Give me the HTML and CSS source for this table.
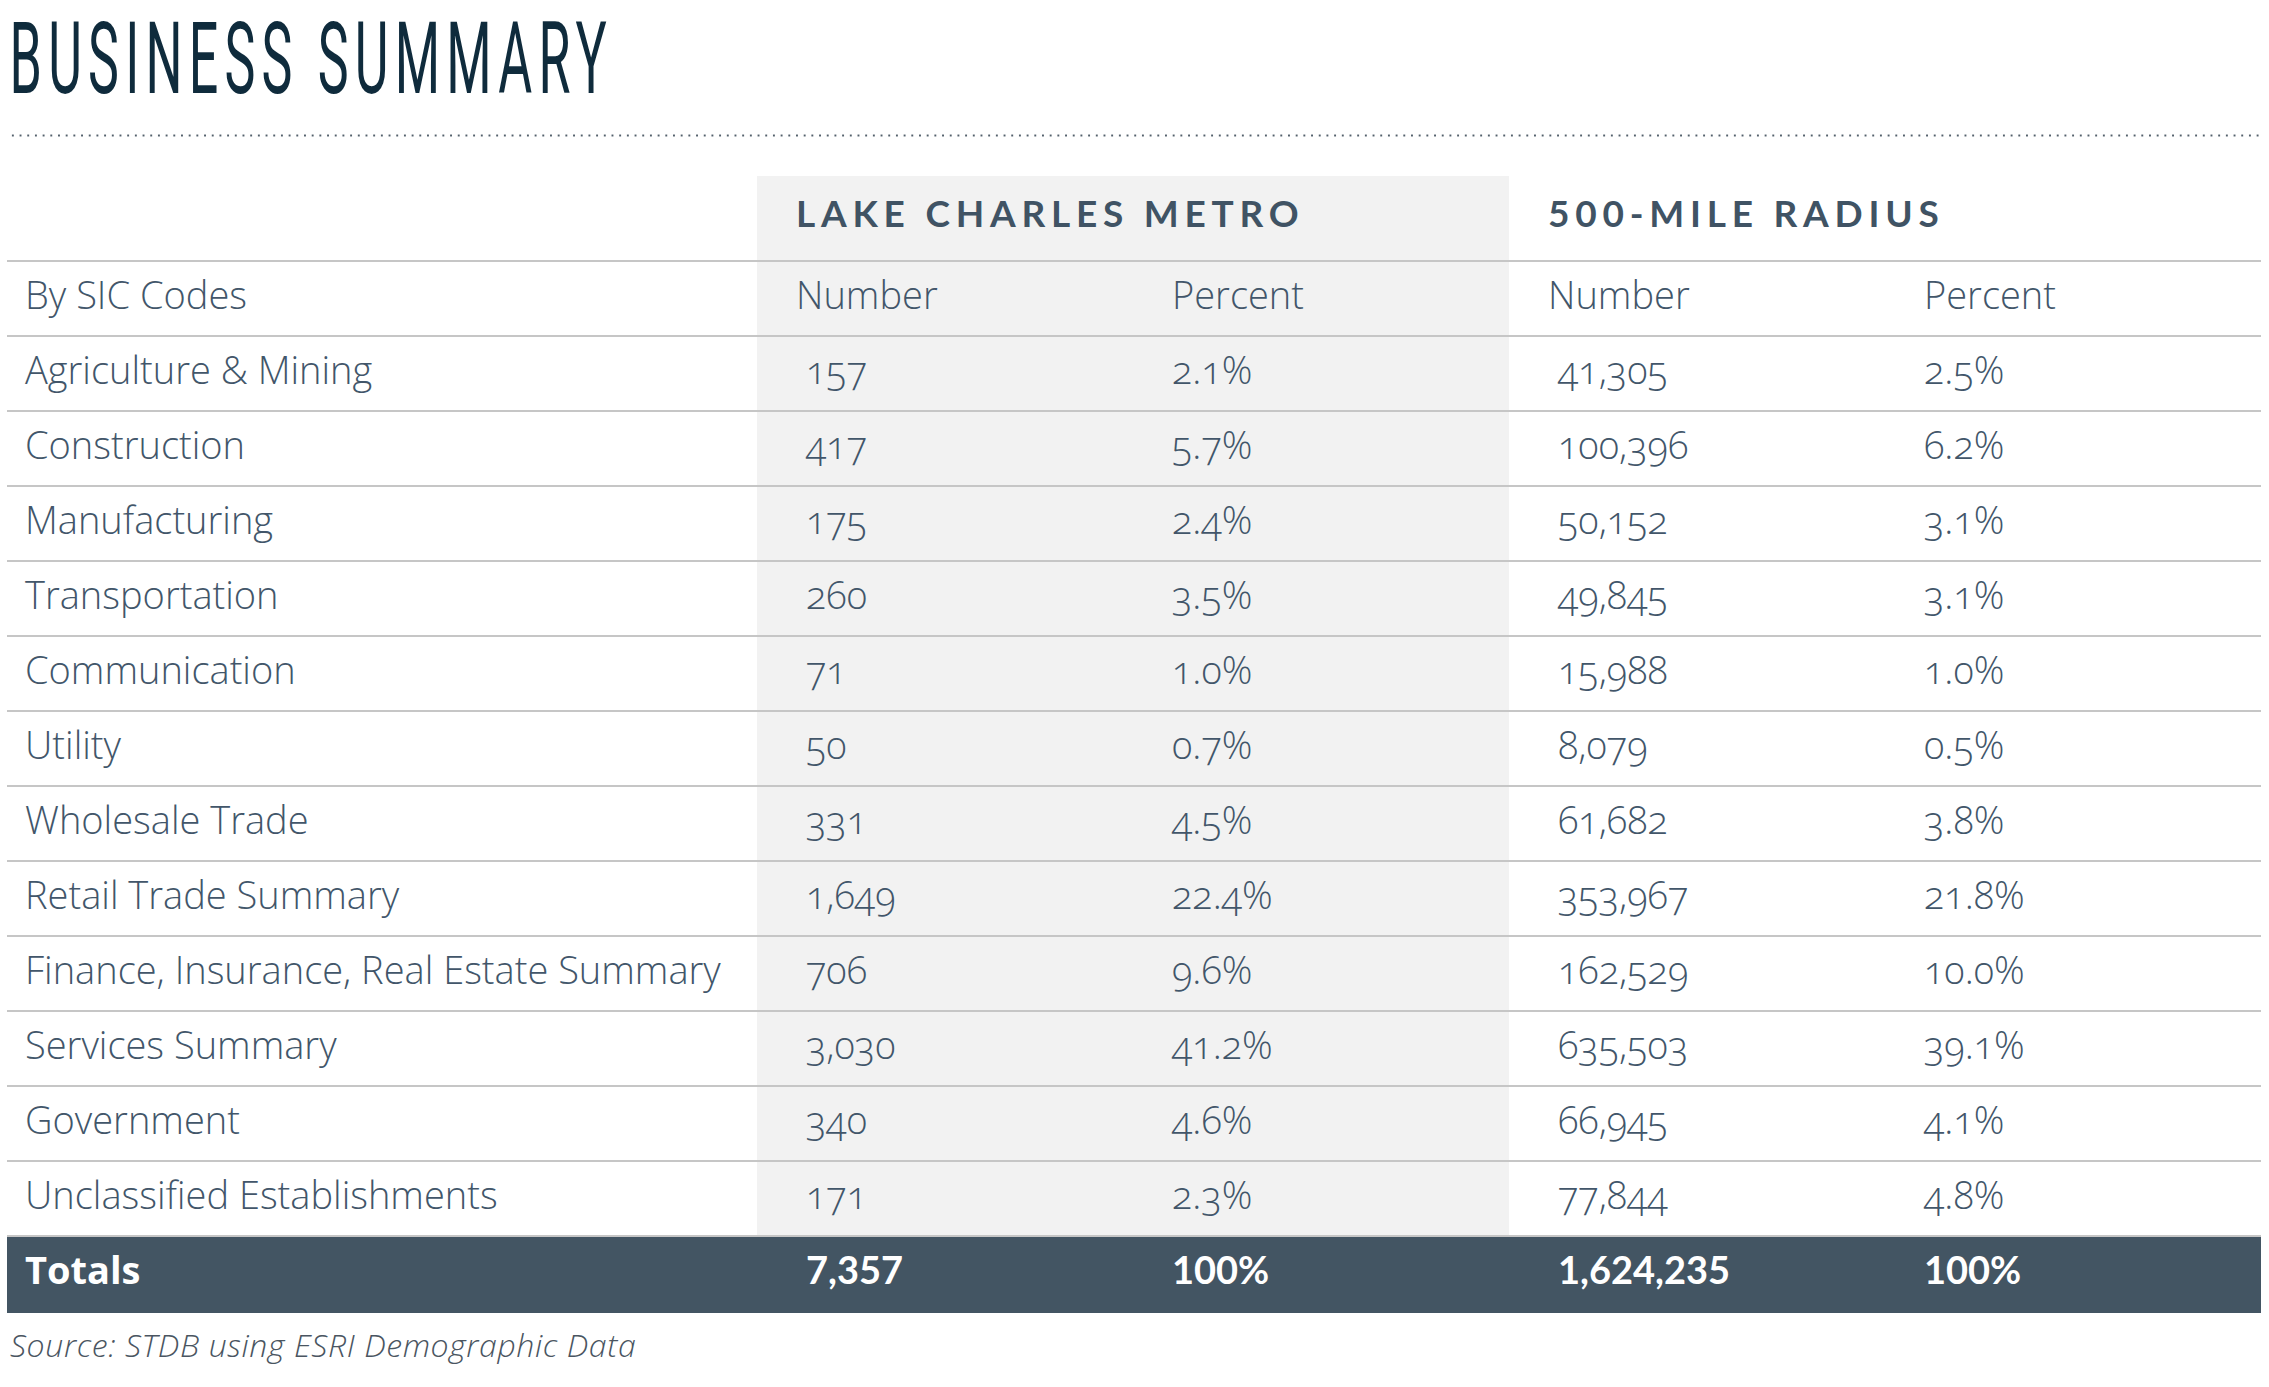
FILE: index.html
```html
<!DOCTYPE html>
<html lang="en">
<head>
<meta charset="utf-8">
<title>Business Summary</title>
<link rel="stylesheet" href="styles.css">
</head>
<body>
<div class="page">
  <header class="head">
    <h1 class="title"><span class="title-text">BUSINESS SUMMARY</span></h1>
    <div class="dots"></div>
  </header>
  <table class="summary">
    <colgroup>
      <col class="c-label">
      <col class="c-data">
      <col class="c-data">
      <col class="c-data">
      <col class="c-data">
    </colgroup>
    <thead>
      <tr class="group-row">
        <th class="blank"></th>
        <th class="group shade" colspan="2">LAKE CHARLES METRO</th>
        <th class="group" colspan="2">500-MILE RADIUS</th>
      </tr>
      <tr class="sub-row">
        <th class="label">By SIC Codes</th>
        <th class="sub shade">Number</th>
        <th class="sub shade">Percent</th>
        <th class="sub">Number</th>
        <th class="sub">Percent</th>
      </tr>
    </thead>
    <tbody>
      <tr><td class="label">Agriculture &amp; Mining</td><td class="num shade">157</td><td class="pct shade">2.1%</td><td class="num">41,305</td><td class="pct">2.5%</td></tr>
      <tr><td class="label">Construction</td><td class="num shade">417</td><td class="pct shade">5.7%</td><td class="num">100,396</td><td class="pct">6.2%</td></tr>
      <tr><td class="label">Manufacturing</td><td class="num shade">175</td><td class="pct shade">2.4%</td><td class="num">50,152</td><td class="pct">3.1%</td></tr>
      <tr><td class="label">Transportation</td><td class="num shade">260</td><td class="pct shade">3.5%</td><td class="num">49,845</td><td class="pct">3.1%</td></tr>
      <tr><td class="label">Communication</td><td class="num shade">71</td><td class="pct shade">1.0%</td><td class="num">15,988</td><td class="pct">1.0%</td></tr>
      <tr><td class="label">Utility</td><td class="num shade">50</td><td class="pct shade">0.7%</td><td class="num">8,079</td><td class="pct">0.5%</td></tr>
      <tr><td class="label">Wholesale Trade</td><td class="num shade">331</td><td class="pct shade">4.5%</td><td class="num">61,682</td><td class="pct">3.8%</td></tr>
      <tr><td class="label">Retail Trade Summary</td><td class="num shade">1,649</td><td class="pct shade">22.4%</td><td class="num">353,967</td><td class="pct">21.8%</td></tr>
      <tr><td class="label">Finance, Insurance, Real Estate Summary</td><td class="num shade">706</td><td class="pct shade">9.6%</td><td class="num">162,529</td><td class="pct">10.0%</td></tr>
      <tr><td class="label">Services Summary</td><td class="num shade">3,030</td><td class="pct shade">41.2%</td><td class="num">635,503</td><td class="pct">39.1%</td></tr>
      <tr><td class="label">Government</td><td class="num shade">340</td><td class="pct shade">4.6%</td><td class="num">66,945</td><td class="pct">4.1%</td></tr>
      <tr><td class="label">Unclassified Establishments</td><td class="num shade">171</td><td class="pct shade">2.3%</td><td class="num">77,844</td><td class="pct">4.8%</td></tr>
    </tbody>
    <tfoot>
      <tr class="totals">
        <td class="label">Totals</td>
        <td class="num">7,357</td>
        <td class="pct">100%</td>
        <td class="num">1,624,235</td>
        <td class="pct">100%</td>
      </tr>
    </tfoot>
  </table>
  <p class="source">Source: STDB using ESRI Demographic Data</p>
</div>
</body>
</html>
```
FILE: styles.css
```css
html, body {
  margin: 0;
  padding: 0;
  background: #ffffff;
}

.page {
  width: 2254px;
  padding: 0 8px 0 7px;
  font-family: "Open Sans", "Noto Sans", sans-serif;
  color: #42566a;
}

.head {
  padding-top: 9px;
}

.title {
  margin: 0;
  height: 100px;
  font-family: Roboto, "Liberation Sans", sans-serif;
  font-weight: 400;
  font-size: 101px;
  line-height: 100px;
  color: #0f2b3c;
  white-space: nowrap;
}

.title-text {
  display: inline-block;
  transform: scaleX(0.515);
  transform-origin: 0 50%;
  padding-left: 5px;
  letter-spacing: 12px;
}

.dots {
  margin-top: 25px;
  height: 3px;
  background-image: radial-gradient(circle, #53606b 0.9px, transparent 1.3px);
  background-size: 7.7px 3px;
  background-position: 2px 0;
  background-repeat: repeat-x;
}

.summary {
  margin-top: 39px;
  width: 2254px;
  border-collapse: collapse;
  table-layout: fixed;
}

.c-label { width: 750px; }
.c-data { width: 376px; }

.summary th,
.summary td {
  padding: 0 0 10px 39px;
  text-align: left;
  vertical-align: middle;
  font-weight: 300;
  font-size: 38px;
  letter-spacing: 0;
  white-space: nowrap;
  border-bottom: 2px solid #c6c6c6;
}

.summary .shade {
  background: #f2f2f2;
}

.group-row th {
  height: 72px;
  padding-bottom: 12px;
}

.summary .blank {
  padding: 0;
}

.summary .group {
  font-family: Lato, "Open Sans", sans-serif;
  font-weight: 700;
  font-size: 37px;
  letter-spacing: 0.156em;
  color: #405364;
}

.sub-row th,
.summary tbody td {
  height: 63px;
}

.summary .label {
  padding-left: 18px;
}

.summary .num {
  padding-left: 49px;
  font-variant-numeric: oldstyle-nums;
}

.summary .pct {
  font-variant-numeric: oldstyle-nums;
}

.summary .totals td {
  background: #435563;
  color: #ffffff;
  height: 64px;
  padding-bottom: 12px;
  border-bottom: 0;
  font-weight: 700;
  letter-spacing: 0;
}

.totals .num,
.totals .pct {
  font-family: Lato, "Open Sans", sans-serif;
  font-variant-numeric: lining-nums;
}

.summary .totals .num,
.summary .totals .pct {
  font-size: 38px;
}

.source {
  margin: 10px 0 0 3px;
  font-style: italic;
  font-weight: 300;
  font-size: 32px;
  letter-spacing: 0.6px;
  color: #4a5561;
}
```
